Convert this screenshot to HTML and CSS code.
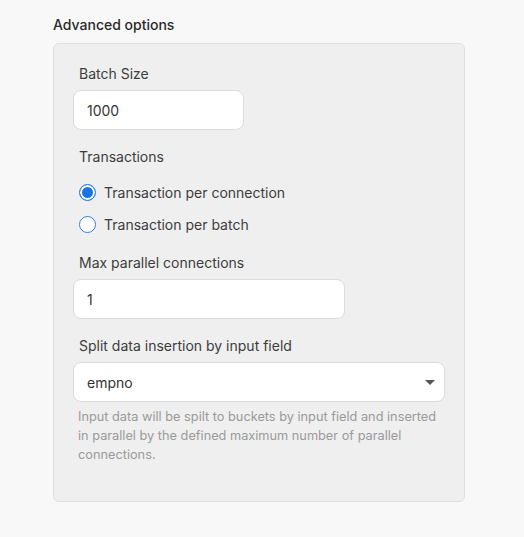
FILE: index.html
```html
<!DOCTYPE html>
<html lang="en">
<head>
  <meta charset="UTF-8" />
  <meta name="viewport" content="width=device-width, initial-scale=1.0"/>
  <title>Advanced options</title>
  <link rel="stylesheet" href="styles.css">
</head>
<body>

  <div class="section">
    <h3 class="section-title">Advanced options</h3>

    <!-- Options panel -->
    <div class="panel">
      <label class="field-label" for="batchSize">Batch Size</label>
      <input type="text" id="batchSize" class="text-input batch" value="1000" />

      <div class="field-label spaced">Transactions</div>
      <div class="radio-group">
        <label class="radio-row">
          <input type="radio" name="txMode" checked />
          <span>Transaction per connection</span>
        </label>
        <label class="radio-row">
          <input type="radio" name="txMode" />
          <span>Transaction per batch</span>
        </label>
      </div>

      <label class="field-label after-radio" for="maxConn">Max parallel connections</label>
      <input type="text" id="maxConn" class="text-input conn" value="1" />

      <label class="field-label spaced" for="splitField">Split data insertion by input field</label>
      <div class="select-wrap">
        <select id="splitField" class="select-input">
          <option>empno</option>
          <option>ename</option>
          <option>deptno</option>
        </select>
        <span class="select-arrow"></span>
      </div>
      <p class="hint">Input data will be spilt to buckets by input field and inserted in parallel by the defined maximum number of parallel connections.</p>
    </div>
  </div>

</body>
</html>
```

FILE: styles.css
```css
body {
  margin: 0;
  font-family: Inter, "Noto Sans", Arial, sans-serif;
  background-color: #f8f8f8;
  color: #333;
}
.section {
  padding: 16px 0 0 53px;
}
.section-title {
  margin: 0;
  font-size: 14px;
  font-weight: 500;
  line-height: 17px;
  color: #2a2a2a;
}
.panel {
  box-sizing: border-box;
  width: 412px;
  height: 459px;
  margin-top: 10px;
  padding: 20px 20px 0 19px;
  background-color: #efefef;
  border: 1px solid #dedede;
  border-radius: 6px;
}
.field-label {
  display: block;
  padding-left: 6px;
  margin-bottom: 6px;
  font-size: 14px;
  line-height: 20px;
  color: #3d3d3d;
}
.spaced {
  margin-top: 17px;
}
.after-radio {
  margin-top: 17px;
}
.text-input,
.select-input {
  box-sizing: border-box;
  display: block;
  height: 40px;
  padding: 0 13px;
  font-family: inherit;
  font-size: 14px;
  color: #333;
  background-color: #fff;
  border: 1px solid #dcdcdc;
  border-radius: 8px;
  outline: none;
}
.batch {
  width: 171px;
}
.conn {
  width: 272px;
}
.radio-group {
  margin-top: 13px;
  padding-left: 6px;
}
.radio-row {
  display: flex;
  align-items: center;
  gap: 8px;
  height: 24px;
  margin-bottom: 8px;
  font-size: 14px;
  color: #3d3d3d;
}
.radio-row:last-child {
  margin-bottom: 0;
}
.radio-row input {
  appearance: none;
  box-sizing: border-box;
  width: 17px;
  height: 17px;
  margin: 0;
  border: 1.5px solid #3a7fd5;
  border-radius: 50%;
  background-color: #fff;
}
.radio-row input:checked {
  background-color: #1a73e8;
  box-shadow: inset 0 0 0 2px #fff;
}
.select-wrap {
  position: relative;
  width: 372px;
}
.select-input {
  width: 100%;
  appearance: none;
}
.select-arrow {
  position: absolute;
  right: 10px;
  top: 18px;
  border-left: 5px solid transparent;
  border-right: 5px solid transparent;
  border-top: 5px solid #555;
}
.hint {
  margin: 5px 0 0;
  padding-left: 5px;
  font-size: 12.75px;
  line-height: 19px;
  color: #9a9a9a;
}
```
